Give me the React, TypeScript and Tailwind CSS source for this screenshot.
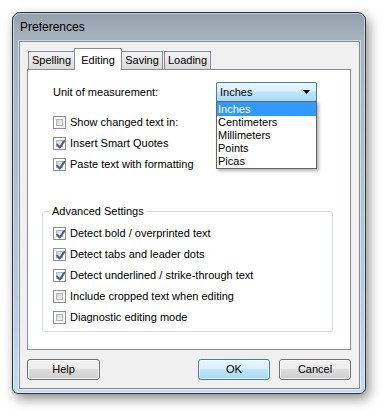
import { useState } from "react";

const font = "font-['Liberation_Sans',Arial,sans-serif]";

function Check({ checked, label }: { checked: boolean; label: string }) {
  return (
    <div className="flex h-[21px] items-center">
      <div className="flex h-[13px] w-[13px] items-center justify-center border border-[#8e8f8f] bg-white p-[2px]">
        <div className="relative h-full w-full border border-[#b3b7bc] bg-gradient-to-br from-[#cdd1d6] via-[#e6e8ea] to-[#f8f8f8]">
          {checked && (
            <svg
              viewBox="0 0 9 9"
              className="absolute -left-[2px] -top-[2px] h-[11px] w-[11px]"
            >
              <path
                d="M1.8 4.6 L3.9 7 L7.6 1.6"
                fill="none"
                stroke="#4a5e9a"
                strokeWidth="1.7"
                strokeLinecap="round"
                strokeLinejoin="round"
              />
            </svg>
          )}
        </div>
      </div>
      <span className="ml-[4px] text-[11px] text-black">{label}</span>
    </div>
  );
}

function Tab({
  label,
  active,
  className,
}: {
  label: string;
  active?: boolean;
  className: string;
}) {
  return (
    <div
      className={
        active
          ? `relative z-10 -mb-px flex h-[22px] items-start justify-center border border-b-0 border-[#898c95] bg-white pt-[3px] ${className}`
          : `flex h-[18px] items-center justify-center border border-b-0 border-[#898c95] bg-gradient-to-b from-[#f3f3f3] to-[#dadada] ${className}`
      }
    >
      <span className="text-[11px] text-black">{label}</span>
    </div>
  );
}

function Button({
  label,
  primary,
  className,
}: {
  label: string;
  primary?: boolean;
  className: string;
}) {
  return (
    <button
      className={
        primary
          ? `flex h-[21px] items-center justify-center rounded-[3px] border border-[#3c7fb1] bg-[linear-gradient(#eaf6fd_0%,#d9f0fc_45%,#bee6fd_50%,#a7d9f5_100%)] text-[11px] text-black shadow-[inset_0_0_0_1px_rgba(255,255,255,0.7)] ${className}`
          : `flex h-[21px] items-center justify-center rounded-[3px] border border-[#707070] bg-[linear-gradient(#f2f2f2_0%,#ebebeb_45%,#dddddd_50%,#cfcfcf_100%)] text-[11px] text-black shadow-[inset_0_0_0_1px_rgba(255,255,255,0.7)] ${className}`
      }
    >
      {label}
    </button>
  );
}

export default function App() {
  const [units] = useState(["Inches", "Centimeters", "Millimeters", "Points", "Picas"]);

  return (
    <div className={`h-[415px] w-[386px] bg-white pl-[12px] pt-[12px] ${font}`}>
      <div className="flex h-[382px] w-[354px] flex-col rounded-t-[8px] rounded-b-[6px] border border-[#2e3338] bg-[linear-gradient(#939fab_0%,#a5b1bd_6%,#b1bdc9_40%,#b9cadb_75%,#c4dcf1_100%)] shadow-[3px_5px_12px_rgba(0,0,0,0.45),inset_0_0_0_1px_rgba(255,255,255,0.45)]">
        {/* title bar */}
        <div className="flex h-[28px] items-center pl-[7px]">
          <span className="text-[12px] text-black">Preferences</span>
        </div>

        {/* client area */}
        <div className="mb-[4px] ml-[6px] mr-[5px] flex flex-1 flex-col border border-[#7f8d9b] bg-[#f0f0f0] pl-[7px] pt-[6px] shadow-[0_0_0_1px_rgba(255,255,255,0.5)]">
          {/* tabs */}
          <div className="flex h-[21px] items-end pl-[1px]">
            <Tab label="Spelling" className="w-[47px]" />
            <Tab label="Editing" active className="-ml-px w-[48px]" />
            <Tab label="Saving" className="-ml-px w-[42px]" />
            <Tab label="Loading" className="ml-[1px] w-[47px]" />
          </div>

          {/* tab panel */}
          <div className="h-[281px] w-[324px] border border-[#898c95] bg-white">
            <div className="mt-[12px] flex items-center pl-[25px]">
              <span className="w-[163px] text-[11px] text-black">Unit of measurement:</span>
              <div className="relative z-20">
                <div className="flex h-[20px] w-[101px] items-center justify-between rounded-[2px] border border-[#3c7fb1] bg-[linear-gradient(#eaf6fd_0%,#d9f0fc_45%,#bee6fd_50%,#a7d9f5_100%)] pl-[3px] pr-[6px]">
                  <span className="text-[11px] text-black">Inches</span>
                  <svg viewBox="0 0 7 4" className="h-[4px] w-[7px]">
                    <path d="M0 0 H7 L3.5 4 Z" fill="#000" />
                  </svg>
                </div>
                <div className="absolute left-0 top-[19px] w-[101px] border border-[#646464] bg-white shadow-[2px_2px_3px_rgba(0,0,0,0.3)]">
                  {units.map((u, i) => (
                    <div
                      key={u}
                      className={
                        i === 0
                          ? "flex h-[14px] items-center bg-[#3399ff] pl-[1px] text-[11px] text-white"
                          : "flex h-[13px] items-center pl-[1px] text-[11px] text-black"
                      }
                    >
                      {u}
                    </div>
                  ))}
                </div>
              </div>
            </div>

            <div className="mt-[10px] flex flex-col pl-[25px]">
              <Check checked={false} label="Show changed text in:" />
              <Check checked label="Insert Smart Quotes" />
              <Check checked label="Paste text with formatting" />
            </div>

            <fieldset className="ml-[14px] mt-[28px] h-[129px] w-[291px] rounded-[3px] border border-[#d5dfe5] pl-[10px]">
              <legend className="-ml-[3px] px-[2px] text-[11px] text-black">Advanced Settings</legend>
              <div className="mt-[3px] flex flex-col">
                <Check checked label="Detect bold / overprinted text" />
                <Check checked label="Detect tabs and leader dots" />
                <Check checked label="Detect underlined / strike-through text" />
                <Check checked={false} label="Include cropped text when editing" />
                <Check checked={false} label="Diagnostic editing mode" />
              </div>
            </fieldset>
          </div>

          {/* buttons */}
          <div className="mt-[9px] flex w-[324px] items-center justify-between">
            <Button label="Help" className="w-[73px]" />
            <div className="flex gap-[9px]">
              <Button label="OK" primary className="w-[72px]" />
              <Button label="Cancel" className="w-[72px]" />
            </div>
          </div>
        </div>
      </div>
    </div>
  );
}
